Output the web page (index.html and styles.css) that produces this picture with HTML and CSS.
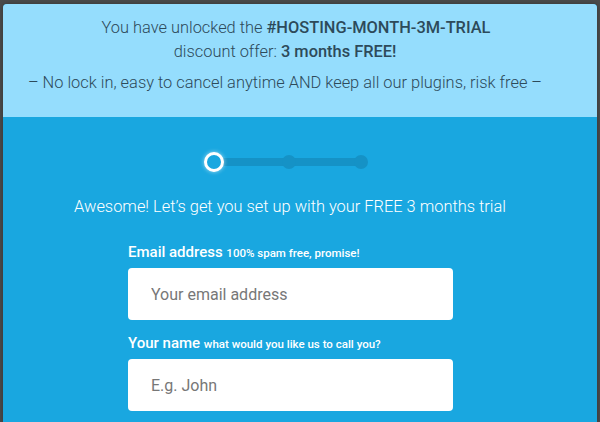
FILE: index.html
```html
<!DOCTYPE html>
<html lang="en">
<head>
    <meta charset="UTF-8">
    <meta name="viewport" content="width=device-width, initial-scale=1.0">
    <title>Hosting Trial Offer</title>
    <link rel="stylesheet" href="styles.css">
</head>
<body>
    <div class="modal">
        <div class="offer">
            <p class="offer-text">
                <span class="offer-code">You have unlocked the <strong>#HOSTING-MONTH-3M-TRIAL</strong></span>
                discount offer: <strong>3 months FREE!</strong>
            </p>
            <p class="offer-note">&ndash; No lock in, easy to cancel anytime AND keep all our plugins, risk free &ndash;</p>
        </div>

        <div class="signup">
            <div class="steps">
                <span class="step current"></span>
                <span class="step"></span>
                <span class="step"></span>
            </div>

            <h2 class="intro">Awesome! Let&rsquo;s get you set up with your FREE 3 months trial</h2>

            <form class="trial-form">
                <label for="email">Email address <small>100% spam free, promise!</small></label>
                <input type="email" id="email" placeholder="Your email address">

                <label for="name">Your name <small>what would you like us to call you?</small></label>
                <input type="text" id="name" placeholder="E.g. John">
            </form>
        </div>
    </div>
</body>
</html>
```

FILE: styles.css
```css
html, body {
    height: 100%;
}
body {
    font-family: Roboto, 'Liberation Sans', Arial, sans-serif;
    margin: 0;
    padding: 4px 3px 0;
    box-sizing: border-box;
    background-color: #4a4a4a;
    overflow: hidden;
}
.modal {
    height: 100%;
    border-radius: 4px 4px 0 0;
    overflow: hidden;
    background-color: #19a7e0;
    box-shadow: 0 0 4px rgba(0, 0, 0, 0.3);
}
.offer {
    background-color: #95ddfd;
    color: #2d4a5a;
    height: 113px;
    box-sizing: border-box;
    padding: 12px 30px 0 0;
    text-align: center;
    font-size: 16.4px;
    font-weight: 300;
}
.offer p {
    margin: 0;
    line-height: 24px;
}
.offer strong {
    font-weight: 500;
}
.offer-code {
    display: block;
    padding-left: 22px;
}
.offer-note {
    margin-top: 7px !important;
}
.signup {
    padding-top: 35px;
    color: white;
}
.steps {
    width: 164px;
    height: 20px;
    margin-left: 201px;
    display: flex;
    justify-content: space-between;
    align-items: center;
    background: linear-gradient(#1592c6, #1592c6) 10px 50% / 147px 8px no-repeat;
}
.step {
    width: 14px;
    height: 14px;
    border-radius: 50%;
    background-color: #1592c6;
}
.step.current {
    width: 20px;
    height: 20px;
    box-sizing: border-box;
    border: 3px solid white;
    background-color: #19a7e0;
    box-shadow: 0 0 4px rgba(255, 255, 255, 0.6);
}
.intro {
    margin: 23px 0 0;
    padding-right: 20px;
    text-align: center;
    font-size: 16.4px;
    font-weight: 300;
    line-height: 24px;
}
.trial-form {
    width: 325px;
    margin: 23px 0 0 125px;
}
.trial-form label {
    display: block;
    font-size: 15px;
    font-weight: 500;
    line-height: 20px;
    margin-bottom: 5px;
}
.trial-form label small {
    font-size: 11.5px;
}
.trial-form input {
    display: block;
    width: 100%;
    height: 52px;
    box-sizing: border-box;
    border: none;
    border-radius: 4px;
    padding: 0 23px;
    font-family: Roboto, sans-serif;
    font-size: 16px;
    color: #333;
    margin-bottom: 13px;
}
.trial-form input::placeholder {
    color: #777;
}
```
